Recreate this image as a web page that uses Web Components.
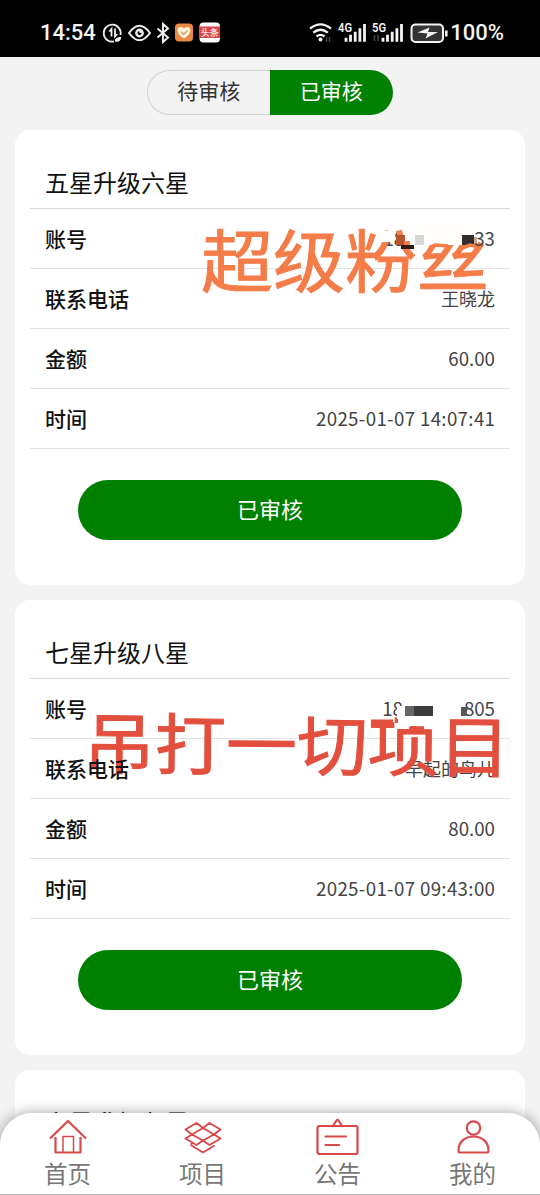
<!DOCTYPE html>
<html lang="zh-CN">
<head>
<meta charset="utf-8">
<title>已审核</title>
<style>
html,body{margin:0;padding:0;height:1195px;overflow:hidden;background:#f3f3f3}
body{font-family:"Noto Sans CJK SC","Noto Sans",sans-serif;color:#111}
</style>
</head>
<body>
<review-app></review-app>
<script>
const define = (name, html) => {
  const t = document.createElement('template');
  t.innerHTML = html;
  customElements.define(name, class extends HTMLElement {
    constructor() {
      super();
      this.attachShadow({ mode: 'open' }).appendChild(t.content.cloneNode(true));
    }
  });
};

define('status-bar', `
<style>
:host{display:flex;justify-content:space-between;align-items:center;height:57px;box-sizing:border-box;padding:9px 36px 0 40px;background:#000;color:#f4f4f4;font:500 22px/30px Roboto,sans-serif}
div{display:flex;align-items:center}
svg{display:block;overflow:visible}
</style>
<div>
  <span>14:54</span>
  <svg width="126" height="24" viewBox="0 0 126 24" style="margin-left:5px" fill="none" stroke="#eee" stroke-width="2">
    <path d="M13 20.500A8.500 8.500 0 1 1 19.500 14M8.300 10.500l2.200-2.500v7.500M14 7.500v8l2.300-2.500" stroke-width="1.800"/>
    <path d="M14 20.500c-.500-3 2-4.500 6-4.500.300 3.500-2.500 5.500-6 4.500z" fill="#eee" stroke="none"/>
    <path d="M28 12q10.500-14.500 21 0q-10.500 14.500-21 0z"/><circle cx="38.500" cy="12" r="3.200" stroke-width="2.400"/><circle cx="39.500" cy="10.800" r="1.300" fill="#eee" stroke="none"/>
    <path d="M56.500 7.500l10.500 9-5 4.500V3l5 4.500-10.500 9" stroke-width="2"/>
    <rect x="74" y="2.500" width="18" height="18" rx="4" fill="#e88a45" stroke="none"/>
    <path d="M83 17.500c-4-3-6.500-5-6.500-8 0-4 5-4.500 6.500-1.500 1.500-3 6.500-2.500 6.500 1.500 0 3-2.500 5-6.500 8z" fill="#fff4dd" stroke="none"/>
    <path d="M80 10.500l2.500 3 4-4" stroke="#c99c70" stroke-width="1.500"/>
    <rect x="98.500" y="1.500" width="20.500" height="20" rx="4" fill="#fff" stroke="none"/><path d="M98.500 5.500h20.500v11.500H98.500z" fill="#d9454c" stroke="none"/>
    <text x="108.700" y="14.800" text-anchor="middle" fill="#ffe9e6" stroke="none" font-family="Noto Sans CJK SC,sans-serif" font-weight="500" font-size="9">头条</text>
  </svg>
</div>
<div>
  <svg width="140" height="24" viewBox="0 0 140 24" fill="none" stroke="#f4f4f4">
    <g stroke-width="2.300"><path d="M1 7.700q10.500-8.600 21 0M4.200 11.700q7.300-6 14.600 0M7.500 15.500q4-3.300 8 0"/></g><circle cx="11.500" cy="18.500" r="2" fill="#f4f4f4" stroke="none"/>
    <path d="M17.500 16v5M20.500 16v5" stroke="#444" stroke-width="1.500"/>
    <text x="29" y="11" fill="#f4f4f4" stroke="none" font-family="Roboto,sans-serif" font-weight="600" font-size="12.500" textLength="14" lengthAdjust="spacingAndGlyphs">4G</text>
    <path d="M37 20.800v-4M41.500 20.800v-7M46.200 20.800v-10M50.900 20.800v-13.500M55.500 20.800V3" stroke-width="2.800"/>
    <text x="63" y="11" fill="#f4f4f4" stroke="none" font-family="Roboto,sans-serif" font-weight="600" font-size="12.500" textLength="14" lengthAdjust="spacingAndGlyphs">5G</text>
    <path d="M65.500 14v6M69 14v6" stroke="#444" stroke-width="1.500"/>
    <path d="M74 20.800v-4M78.500 20.800v-7M83.200 20.800v-10M87.900 20.800v-13.500M92.500 20.800V3" stroke-width="2.800"/>
    <rect x="102.500" y="3.500" width="31.500" height="17.500" rx="4" fill="#333" stroke-width="2"/><path d="M137.300 9.500v6" stroke-width="2.500"/>
    <path d="M108.500 11.500l12-5-1.500 4.500h10l-12.500 6.500 2-5z" fill="#f4f4f4" stroke="none"/>
  </svg>
  <span style="margin-left:1px">100%</span>
</div>`);

define('review-tabs', `
<style>
:host{display:flex;height:45px;width:246px;margin:13px auto 15px 147px;font-size:21px;line-height:41px;text-align:center;color:#333}
span{flex:1;box-sizing:border-box}
.off{border:1.500px solid #d2d2d2;border-right:0;border-radius:23px 0 0 23px;line-height:39px}
.on{flex:0 0 123.500px;background:#008000;color:#fff;border-radius:0 23px 23px 0}
</style>
<span class="off">待审核</span><span class="on">已审核</span>`);

define('record-row', `
<style>
:host{display:flex;justify-content:space-between;align-items:center;height:60px;box-sizing:border-box;padding:0 15px 2px;border-bottom:1px solid #e3e3e3;color:#444;font-size:18px}
.label{position:relative;z-index:3;font-weight:500;font-size:21px;line-height:30px;color:#111}
.value{display:flex;line-height:28px;padding-top:1px}
</style>
<span class="label"><slot name="label"></slot></span><span class="value"><slot></slot></span>`);

define('record-card', `
<style>
:host{display:block;position:relative;isolation:isolate;height:455px;box-sizing:border-box;padding:30px 15px 45px;background:#fff;border-radius:15px}
.title{height:49px;box-sizing:border-box;padding:0 15px;border-bottom:1.500px solid #dadada;font-size:24px;line-height:44px;color:#111}
.btn{width:384px;height:60px;margin:31px auto 0;border-radius:30px;background:#008000;color:#fff;text-align:center;font-size:22px;line-height:56px}
</style>
<div class="title"><slot name="title"></slot></div>
<slot></slot>
<div class="btn">已审核</div>
<slot name="mark"></slot>`);

define('nav-item', `
<style>
:host{display:flex;flex:1;flex-direction:column;align-items:center;color:#777;font-size:23.500px;line-height:34px}
::slotted(svg){display:block;width:44px;height:40px;fill:none;stroke:#d9484a;stroke-width:2.200;stroke-linejoin:round}
span{margin-top:-1px;height:34px}
</style>
<slot name="icon"></slot><span><slot></slot></span>`);

define('bottom-nav', `
<style>
:host{display:flex;position:absolute;left:0;right:0;bottom:0;height:82px;box-sizing:border-box;padding-top:4px;background:#fff;border-radius:32px 32px 0 0;box-shadow:0 0 14px rgba(0,0,0,.38);z-index:5}
i{position:absolute;left:0;right:0;bottom:0;height:1px;background:#bbb}
</style>
<nav-item><svg slot="icon" viewBox="0 0 44 40"><path d="M4 21.500L22 4l18 17.500M9.500 20v15.500h25V20"/><path d="M17 35v-15.500h10.500V35" stroke-width="1.500"/></svg>首页</nav-item>
<nav-item><svg slot="icon" viewBox="0 0 44 40" style="stroke-width:1.900"><path d="M15.500 6l6.500 5-11 6.500-6.500-5zM28.500 6l11 6.500-6.500 5-11-6.500zM11 17.500l11 6-6.500 4.500-11-6.500zM33 17.500l6.500 4-11 6.500-6.500-4.500zM11 17.500l11-6.500 11 6.500-11 6zM10.500 25v3.500l11.500 7 11.500-7"/></svg>项目</nav-item>
<nav-item><svg slot="icon" viewBox="0 0 44 40"><rect x="1.500" y="9" width="40" height="28" rx="2"/><path d="M17 9l3.500-5.500q1-1.500 2 0L26 9M9.500 19.500h20.500M9.500 28h13.500" stroke-linecap="round"/></svg>公告</nav-item>
<nav-item><svg slot="icon" viewBox="0 0 44 40"><circle cx="22.500" cy="11" r="6.700"/><path d="M9 35.500h27q1.500 0 1.500-2c0-9-7-14-15-14s-15 5-15 14q0 2 1.500 2z"/></svg>我的</nav-item>
<i></i>`);

define('review-app', `
<style>
:host{display:block;position:relative;width:540px;height:1195px;overflow:hidden;background:#f3f3f3}
main{display:flex;flex-direction:column;gap:15px;padding:0 15px;height:1065px;overflow:hidden}
record-card{flex:none}
.num{font-size:18.700px}
.date{letter-spacing:.35px;margin-right:-.35px}
.front{position:relative;z-index:3}
.mark,.mosaic{position:absolute;white-space:nowrap;line-height:80px}
.mark{z-index:1;font-size:72px;font-weight:400;-webkit-text-stroke:1px currentColor}
.mosaic{z-index:2;left:0;top:0}
</style>
<status-bar></status-bar>
<review-tabs></review-tabs>
<main>
  <record-card>
    <span slot="title">五星升级六星</span>
    <record-row><span slot="label">账号</span><span class="num" style="margin-right:70px">18</span><span class="num front">33</span></record-row>
    <record-row><span slot="label">联系电话</span><span class="front">王晓龙</span></record-row>
    <record-row><span slot="label">金额</span><span class="num">60.00</span></record-row>
    <record-row><span slot="label">时间</span><span class="num date">2025-01-07 14:07:41</span></record-row>
    <span slot="mark" class="mark" style="left:186px;top:88px;color:#f47c49;transform:scaleY(.94)">超级粉丝</span>
    <svg slot="mark" class="mosaic" width="510" height="150" viewBox="15 130 510 150">
      <path d="M380 231h12v11h-12z" fill="#fff"/>
      <path d="M415 224h61v21h-61z" fill="#fffefa"/>
      <path d="M396 235h9v10h-9z" fill="#b5542e"/><path d="M405 235h9v10h-9z" fill="#fff"/><path d="M401 245h13v4h-13z" fill="#341a14"/><path d="M404 241h6v4h-6z" fill="#f47c49"/>
      <path d="M415 235h9v10h-9z" fill="#d8d8d8"/>
      <path d="M462 235h12v10h-12z" fill="#302e2e"/><path d="M474 237h3v9h-3z" fill="#d7a58e"/>
      <path d="M429 248l6-3 13 1M462 248l8-3 9 2" fill="none" stroke="#f47c49" stroke-width="3.500"/>
    </svg>
  </record-card>
  <record-card>
    <span slot="title">七星升级八星</span>
    <record-row><span slot="label">账号</span><span class="num front" style="margin-right:61px">18</span><span class="num">805</span></record-row>
    <record-row><span slot="label">联系电话</span><span>早起的鸟儿</span></record-row>
    <record-row><span slot="label">金额</span><span class="num">80.00</span></record-row>
    <record-row><span slot="label">时间</span><span class="num date">2025-01-07 09:43:00</span></record-row>
    <span slot="mark" class="mark" style="left:69px;top:101px;font-size:71px;color:#e34f3e;transform:rotate(.5deg) scaleY(.94)">吊打一切项目</span>
    <svg slot="mark" class="mosaic" style="z-index:4" width="510" height="150" viewBox="15 600 510 150">
      <path d="M397 706h8v13h-8z" fill="#fff"/>
      <path d="M398 714h39v12h-39z" fill="#fff"/>
      <path d="M405 706h9v10h-9z" fill="#666"/><path d="M414 706h19v10h-19z" fill="#3c3c3e"/>
      <path d="M461 707h6v9h-6z" fill="#59595d"/>
      <path d="M409 731l6-3h9" fill="none" stroke="#e34f3e" stroke-width="3.500"/>
      <path d="M371 722h22" fill="none" stroke="#e34f3e" stroke-width="5"/>
    </svg>
  </record-card>
  <record-card><span slot="title">六星升级七星</span></record-card>
</main>
<bottom-nav></bottom-nav>`);
</script>
</body>
</html>
